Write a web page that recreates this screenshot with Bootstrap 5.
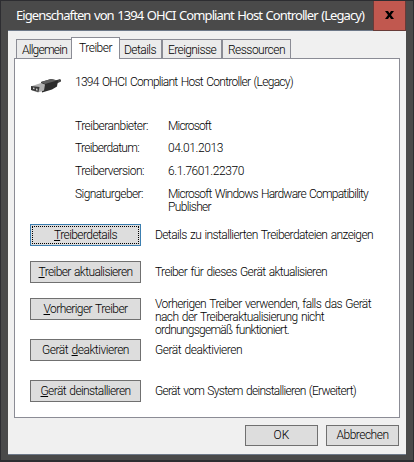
<!DOCTYPE html>
<html lang="de">
<head>
<meta charset="utf-8">
<meta name="viewport" content="width=device-width, initial-scale=1">
<title>Eigenschaften von 1394 OHCI Compliant Host Controller (Legacy)</title>
<link href="https://cdn.jsdelivr.net/npm/bootstrap@5.3.0/dist/css/bootstrap.min.css" rel="stylesheet">
<style>
body{font:300 12px/13px Roboto,"Liberation Sans",sans-serif;color:#000;background:#4a4a4a}
.dialog-window{width:414px;height:462px;background:#4a4a4a;border:2px solid #2d2d31;border-top-width:1px;border-right-width:1px;border-left-width:1px;padding:0 7px 7px 7px}
.title-bar{height:29px;padding-left:8px;color:#fff;font:400 13px/20px "Noto Sans",sans-serif}
.close-btn{width:33px;height:30px;background:#c1584f;border:1px solid #683b38;border-top:0;border-radius:0;padding:0 0 1px}
.client{height:425px;background:#f0f0f0;border-top:1px solid #6d7888;border-bottom:1px solid #6d7888;padding:7px 6px 0}
.tabs{height:20px;padding-left:2px;margin-bottom:0;border:0}
.tabs .nav-link{height:19px;padding:4px 0 0 5px;border:1px solid #8b8c95;border-bottom:0;border-radius:0;background:#ebebeb;color:#000;margin:0}
.tabs .nav-link.active{height:22px;padding:4px 0 0 7px;background:#fff;color:#000;border-color:#8b8c95;margin-bottom:-1px;position:relative;z-index:1}
.w-a{width:55px}.w-t{width:49px}.tabs .w-d{width:42px;padding-left:4px}.w-e{width:60px}.w-r{width:69px}
.sheet{width:386px;height:360px;background:#fff;border:1px solid #8b8c95;padding:17px 0 0 15px}
.device{height:44px}
.device svg{margin:1px 13px 0 0}
.facts{display:grid;grid-template-columns:93px 1fr;grid-template-rows:22px 23px 23px 36px;padding-left:45px}
.actions{display:grid;grid-template-columns:111px 1fr;column-gap:14px;grid-template-rows:37px 37px 41px 41px 24px}
.win-btn{width:111px;height:22px;padding:0;border:1px solid #707070;border-radius:0;background:#ddd;color:#000;font:inherit;line-height:19px;display:block}
.win-btn.focused{border-color:#3c7fb1;outline:1px dotted #000;outline-offset:-3px}
.hint{padding-top:5px}
.foot{padding:7px 1px 0 0;gap:8px}
.foot .win-btn{width:73px;height:21px}
.t{display:inline-block;white-space:nowrap;word-spacing:1px}
u{text-underline-offset:1px;text-decoration-thickness:1px;text-decoration-skip-ink:none}
</style>
</head>
<body class="m-0 overflow-hidden">
<div class="dialog-window">
  <header class="title-bar d-flex justify-content-between">
    <div class="pt-1"><span class="t" data-w="348">Eigenschaften von 1394 OHCI Compliant Host Controller (Legacy)</span></div>
    <button class="btn close-btn d-flex align-items-center justify-content-center" aria-label="Schließen">
      <svg width="9" height="8" viewBox="0 0 9 8"><path d="M0 0h3l1.500 2.300L6 0h3L6 4l3 4H6L4.500 5.700 3 8H0l3-4z" fill="#000"/></svg>
    </button>
  </header>
  <main class="client">
    <nav class="nav nav-tabs tabs align-items-end flex-nowrap">
      <a class="nav-link border-end-0 w-a"><span class="t" data-w="45">Allgemein</span></a>
      <a class="nav-link active w-t"><span class="t" data-w="33">Treiber</span></a>
      <a class="nav-link border-start-0 w-d"><span class="t" data-w="32">Details</span></a>
      <a class="nav-link w-e"><span class="t" data-w="48">Ereignisse</span></a>
      <a class="nav-link w-r"><span class="t" data-w="57">Ressourcen</span></a>
    </nav>
    <section class="sheet">
      <div class="device d-flex align-items-start">
        <svg width="32" height="20" viewBox="0 0 32 20">
          <path d="M24 5l3-2 3-1 1 1v1.500l-4 2-2 2z" fill="#444"/>
          <path d="M11 5l10-3 7 1.500-1 6-5 3-10 3z" fill="#2c2c2c"/>
          <path d="M11 5l10-3 6 1.500-12 3.500z" fill="#5e5e5e"/>
          <path d="M2 9l9-3 4 1.500-1 6-6 2-6-2z" fill="#b0b0b0"/>
          <path d="M1 9l8.500 1-1 5L1 13z" fill="#383838"/>
          <path d="M3 10.500l1.500.3v1.500L3 12zM6 11.500l1.500.3v2l-1.500-.5z" fill="#ccc"/>
        </svg>
        <span class="t" data-w="218">1394 OHCI Compliant Host Controller (Legacy)</span>
      </div>
      <div class="facts">
        <div><span class="t" data-w="73">Treiberanbieter:</span></div><div><span class="t" data-w="43">Microsoft</span></div>
        <div><span class="t" data-w="64">Treiberdatum:</span></div><div><span class="t" data-w="55">04.01.2013</span></div>
        <div><span class="t" data-w="69">Treiberversion:</span></div><div><span class="t" data-w="76">6.1.7601.22370</span></div>
        <div><span class="t" data-w="68">Signaturgeber:</span></div><div><span class="t" data-w="200">Microsoft Windows Hardware Compatibility</span><br><span class="t" data-w="43">Publisher</span></div>
      </div>
      <div class="actions">
        <button class="btn win-btn focused"><span class="t" data-w="63"><u>T</u>reiberdetails</span></button>
        <div class="hint"><span class="t" data-w="218">Details zu installierten Treiberdateien anzeigen</span></div>
        <button class="btn win-btn"><span class="t" data-w="94"><u>T</u>reiber aktualisieren</span></button>
        <div class="hint"><span class="t" data-w="172">Treiber für dieses Gerät aktualisieren</span></div>
        <button class="btn win-btn"><span class="t" data-w="84"><u>V</u>orheriger Treiber</span></button>
        <div><span class="t" data-w="216">Vorherigen Treiber verwenden, falls das Gerät</span><br><span class="t" data-w="169">nach der Treiberaktualisierung nicht</span><br><span class="t" data-w="134">ordnungsgemäß funktioniert.</span></div>
        <button class="btn win-btn"><span class="t" data-w="87">Gerät <u>d</u>eaktivieren</span></button>
        <div class="hint"><span class="t" data-w="87">Gerät deaktivieren</span></div>
        <button class="btn win-btn"><span class="t" data-w="90"><u>G</u>erät deinstallieren</span></button>
        <div class="hint"><span class="t" data-w="201">Gerät vom System deinstallieren (Erweitert)</span></div>
      </div>
    </section>
    <footer class="foot d-flex justify-content-end">
      <button class="btn win-btn"><span class="t" data-w="16">OK</span></button>
      <button class="btn win-btn"><span class="t" data-w="52">Abbrechen</span></button>
    </footer>
  </main>
</div>
<script src="https://cdn.jsdelivr.net/npm/bootstrap@5.3.0/dist/js/bootstrap.bundle.min.js"></script>
<script>
// Tighten each label so that it keeps its designed width.
document.querySelectorAll('.t[data-w]').forEach(function (el) {
  var gap = el.dataset.w - el.getBoundingClientRect().width;
  el.style.letterSpacing = (gap / el.textContent.length) + 'px';
});
</script>
</body>
</html>
